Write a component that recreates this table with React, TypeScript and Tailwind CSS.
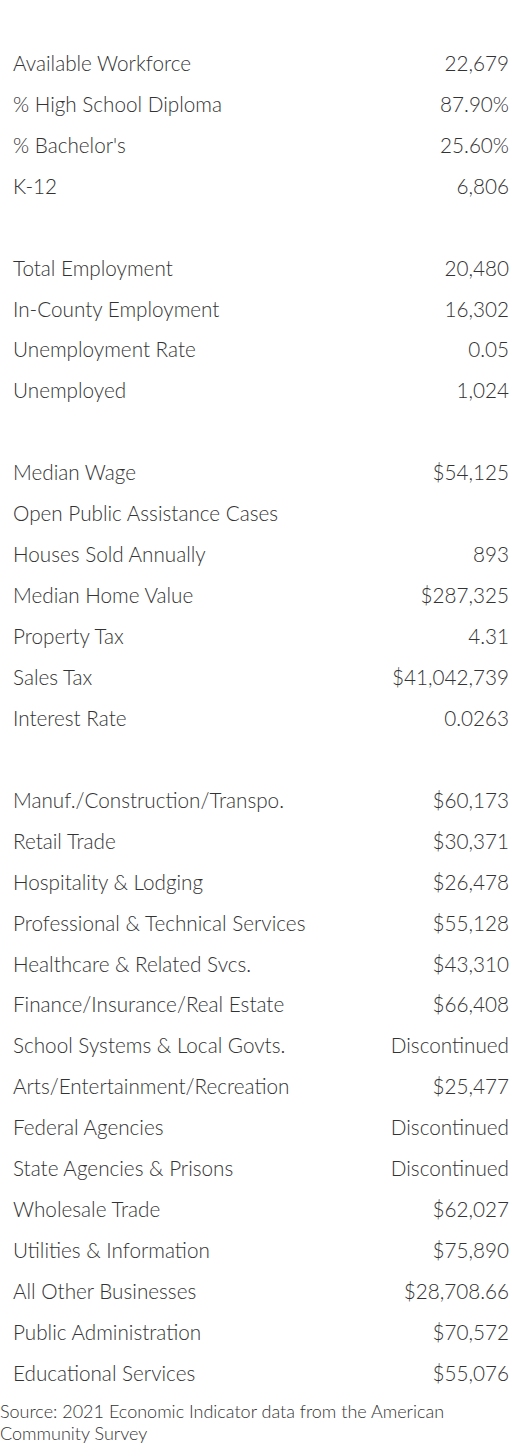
import React from "react";

type Section = { title: string; right: string; rows: [string, string][] };

const sections: Section[] = [
  {
    title: "Labor",
    right: "2021",
    rows: [
      ["Available Workforce", "22,679"],
      ["% High School Diploma", "87.90%"],
      ["% Bachelor's", "25.60%"],
      ["K-12", "6,806"],
    ],
  },
  {
    title: "Employment",
    right: "2021",
    rows: [
      ["Total Employment", "20,480"],
      ["In-County Employment", "16,302"],
      ["Unemployment Rate", "0.05"],
      ["Unemployed", "1,024"],
    ],
  },
  {
    title: "Economic Indicators",
    right: "2021",
    rows: [
      ["Median Wage", "$54,125"],
      ["Open Public Assistance Cases", ""],
      ["Houses Sold Annually", "893"],
      ["Median Home Value", "$287,325"],
      ["Property Tax", "4.31"],
      ["Sales Tax", "$41,042,739"],
      ["Interest Rate", "0.0263"],
    ],
  },
  {
    title: "Wages",
    right: "2021",
    rows: [
      ["Manuf./Construction/Transpo.", "$60,173"],
      ["Retail Trade", "$30,371"],
      ["Hospitality & Lodging", "$26,478"],
      ["Professional & Technical Services", "$55,128"],
      ["Healthcare & Related Svcs.", "$43,310"],
      ["Finance/Insurance/Real Estate", "$66,408"],
      ["School Systems & Local Govts.", "Discontinued"],
      ["Arts/Entertainment/Recreation", "$25,477"],
      ["Federal Agencies", "Discontinued"],
      ["State Agencies & Prisons", "Discontinued"],
      ["Wholesale Trade", "$62,027"],
      ["Utilities & Information", "$75,890"],
      ["All Other Businesses", "$28,708.66"],
      ["Public Administration", "$70,572"],
      ["Educational Services", "$55,076"],
    ],
  },
];

export default function App() {
  return (
    <div className="w-[522px] bg-white font-['Lato',sans-serif] font-light text-[#333333]">
      <div className="pt-[2px]">
        {sections.map((s) => (
          <div key={s.title}>
            <div className="flex h-[40.94px] items-center justify-between px-[13px] text-[20.7px] text-white">
              <span>{s.title}</span>
              <span>{s.right}</span>
            </div>
            {s.rows.map(([k, v]) => (
              <div
                key={k}
                className="flex h-[40.94px] items-center justify-between px-[13px] text-[20.7px]"
              >
                <span>{k}</span>
                <span>{v}</span>
              </div>
            ))}
          </div>
        ))}
      </div>
      <p className="mt-[6px] text-[18px] leading-[22px]">
        Source: 2021 Economic Indicator data from the American Community Survey
      </p>
    </div>
  );
}
